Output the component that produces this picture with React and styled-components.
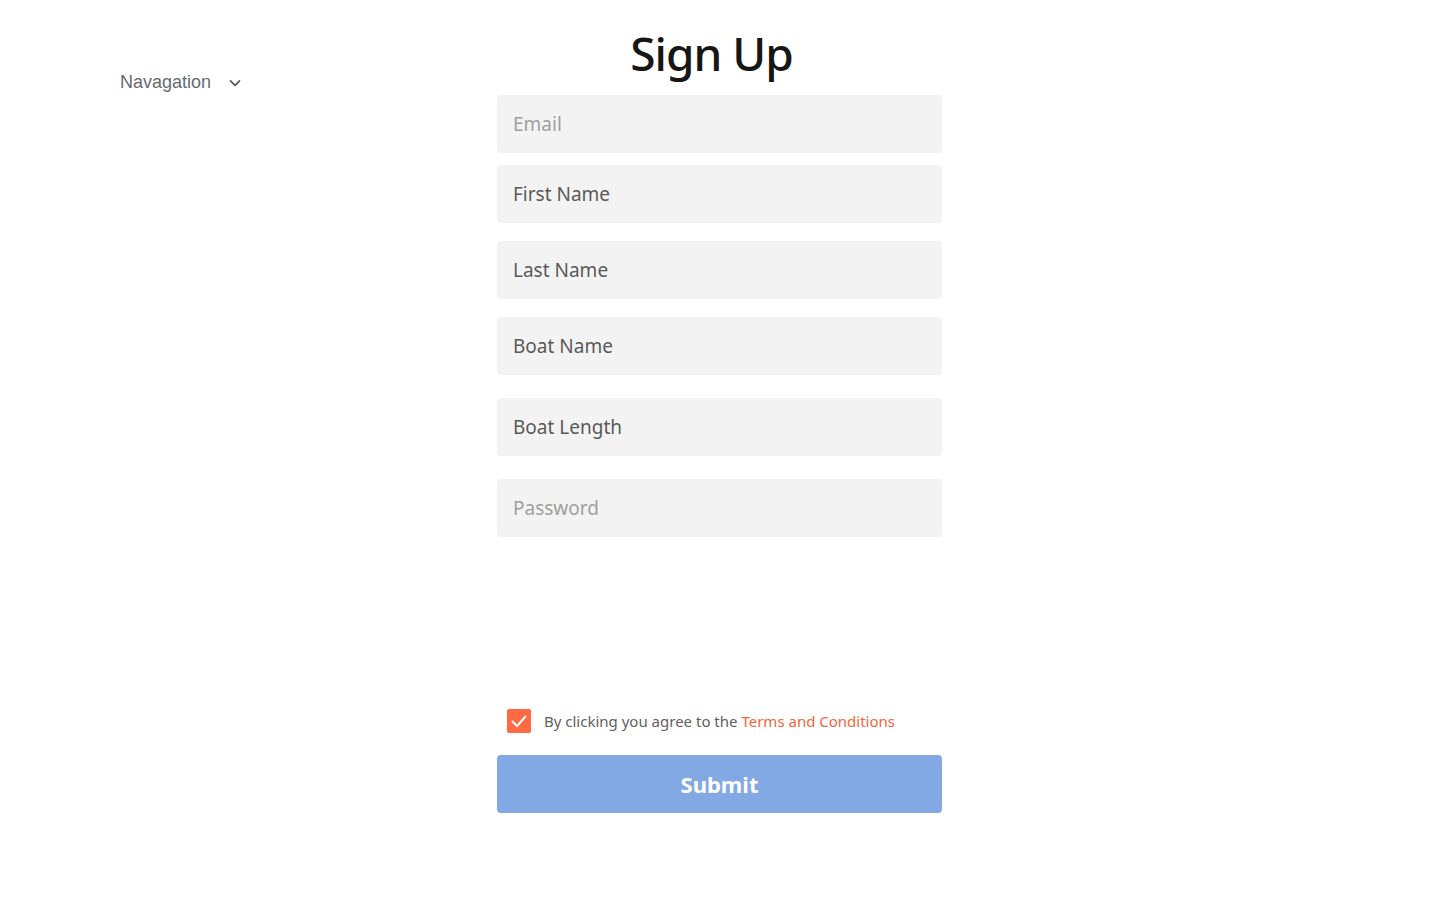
import React from 'react';
import styled, { createGlobalStyle } from 'styled-components';

const GlobalStyle = createGlobalStyle`
  html, body {
    margin: 0;
    padding: 0;
    background: #ffffff;
  }
  body {
    font-family: "Noto Sans", "Open Sans", sans-serif;
  }
  * {
    box-sizing: border-box;
  }
`;

const Page = styled.div`
  display: grid;
  grid-template-columns: 497px 445px 1fr;
  min-height: 900px;
`;

const NavArea = styled.div`
  padding: 72px 0 0 120px;
`;

const NavToggle = styled.button`
  display: flex;
  align-items: center;
  gap: 17px;
  padding: 0;
  border: none;
  background: transparent;
  font-family: "Liberation Sans", Arial, sans-serif;
  font-size: 18px;
  color: #666b70;
  cursor: pointer;
`;

const Form = styled.form`
  display: flex;
  flex-direction: column;
  padding-top: 22px;
`;

const Title = styled.h1`
  margin: 0 0 11px -16px;
  text-align: center;
  font-size: 46px;
  line-height: 62px;
  font-weight: 500;
  color: #161616;
  letter-spacing: -1px;
`;

const Field = styled.input`
  display: block;
  width: 100%;
  height: 58px;
  margin-top: ${(p) => p.$gap}px;
  padding: 0 16px;
  border: none;
  border-radius: 4px;
  background: #f3f3f3;
  font-family: inherit;
  font-size: 19px;
  color: #525252;
  outline: none;

  &::placeholder {
    color: ${(p) => (p.$muted ? '#a0a0a0' : '#5a5a5a')};
  }
`;

const Agree = styled.label`
  display: flex;
  align-items: center;
  gap: 13px;
  margin-top: 172px;
  padding-left: 10px;
  font-size: 15px;
  line-height: 20px;
  color: #5f5f5f;
`;

const Box = styled.span`
  display: flex;
  align-items: center;
  justify-content: center;
  width: 24px;
  height: 24px;
  border-radius: 2px;
  background: #fd6a44;
`;

const TermsLink = styled.a`
  color: #f4643c;
  text-decoration: none;
`;

const Submit = styled.button`
  height: 58px;
  margin-top: 22px;
  border: none;
  border-radius: 4px;
  background: #82a9e4;
  color: #ffffff;
  font-family: inherit;
  font-size: 22px;
  font-weight: 700;
  cursor: pointer;
`;

const fields = [
  { placeholder: 'Email', gap: 0, muted: true },
  { placeholder: 'First Name', gap: 12 },
  { placeholder: 'Last Name', gap: 18 },
  { placeholder: 'Boat Name', gap: 18 },
  { placeholder: 'Boat Length', gap: 23 },
  { placeholder: 'Password', gap: 23, muted: true, type: 'password' },
];

export default function App() {
  return (
    <>
      <GlobalStyle />
      <Page>
        <NavArea>
          <NavToggle type="button">
            Navagation
            <svg width="14" height="14" viewBox="0 0 14 14" fill="none">
              <path d="M2.5 4.8L7 9.3l4.5-4.5" stroke="#555a60" strokeWidth="1.7" strokeLinecap="round" strokeLinejoin="round" />
            </svg>
          </NavToggle>
        </NavArea>
        <Form onSubmit={(e) => e.preventDefault()}>
          <Title>Sign Up</Title>
          {fields.map((f) => (
            <Field
              key={f.placeholder}
              type={f.type || 'text'}
              placeholder={f.placeholder}
              $gap={f.gap}
              $muted={f.muted}
            />
          ))}
          <Agree>
            <Box>
              <svg width="18" height="18" viewBox="0 0 18 18" fill="none">
                <path d="M2.5 9.5l4.5 4.5 8.5-9.5" stroke="#ffffff" strokeWidth="2" strokeLinecap="round" strokeLinejoin="round" />
              </svg>
            </Box>
            <span>
              By clicking you agree to the <TermsLink href="#">Terms and Conditions</TermsLink>
            </span>
          </Agree>
          <Submit type="submit">Submit</Submit>
        </Form>
        <div />
      </Page>
    </>
  );
}
